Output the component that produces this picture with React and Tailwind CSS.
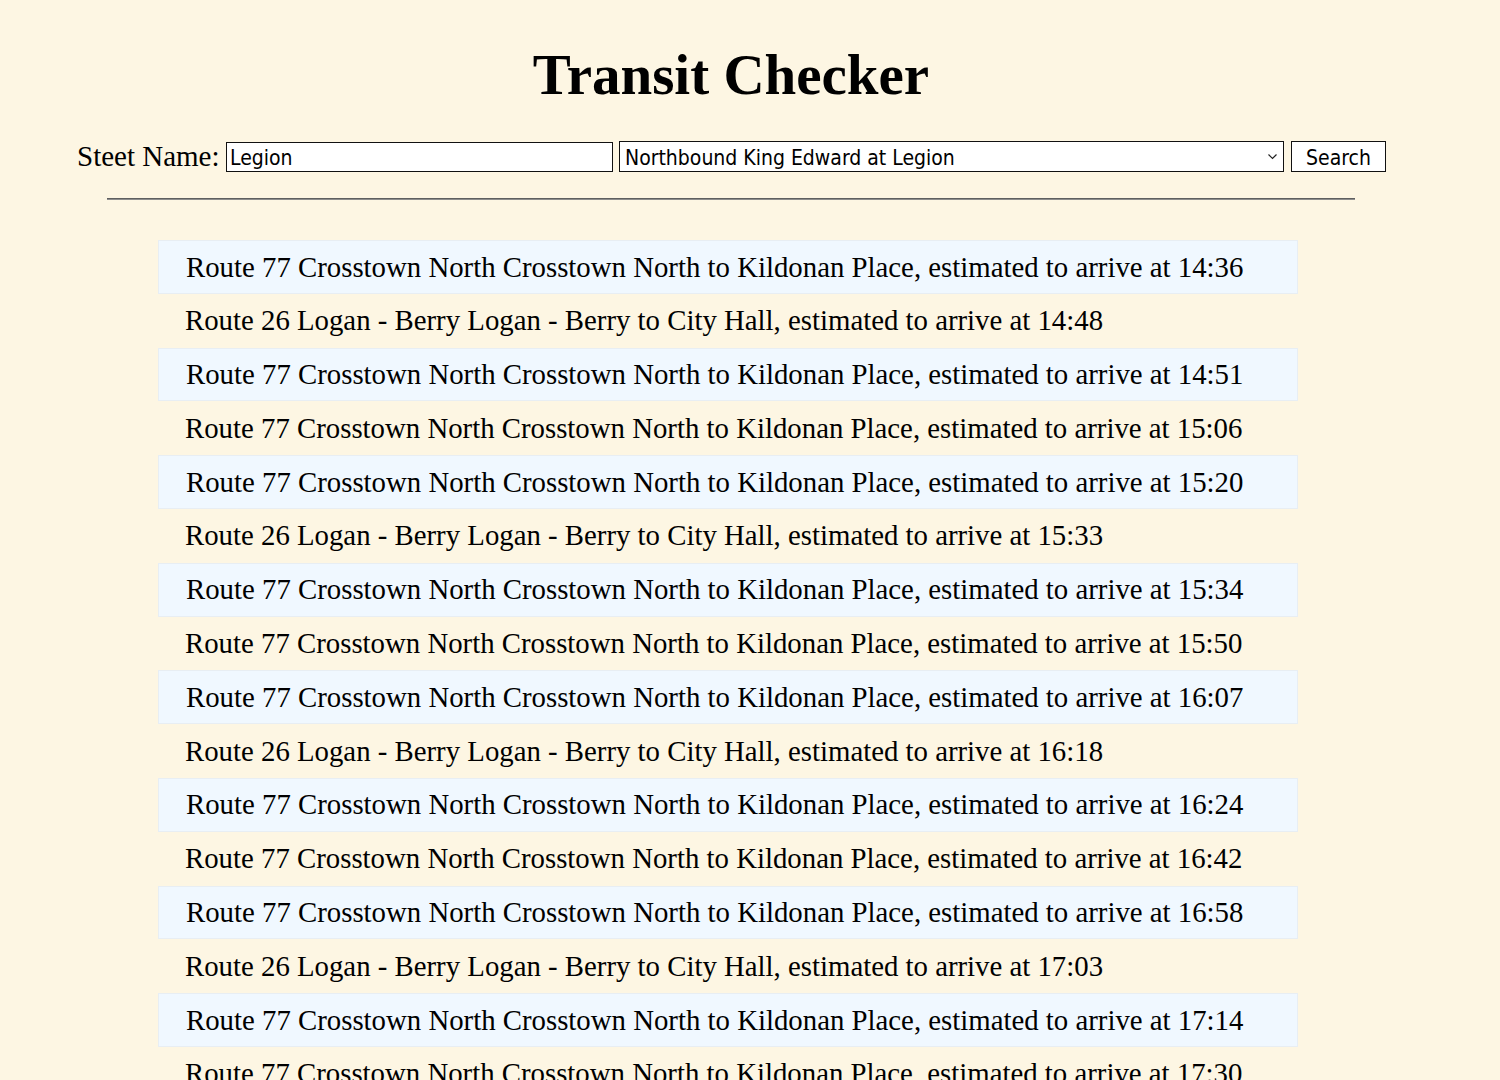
import React from "react";

const rows = [
  ["77", "14:36"],
  ["26", "14:48"],
  ["77", "14:51"],
  ["77", "15:06"],
  ["77", "15:20"],
  ["26", "15:33"],
  ["77", "15:34"],
  ["77", "15:50"],
  ["77", "16:07"],
  ["26", "16:18"],
  ["77", "16:24"],
  ["77", "16:42"],
  ["77", "16:58"],
  ["26", "17:03"],
  ["77", "17:14"],
  ["77", "17:30"],
];

function label(route, time) {
  if (route === "77")
    return `Route 77 Crosstown North Crosstown North to Kildonan Place, estimated to arrive at ${time}`;
  return `Route 26 Logan - Berry Logan - Berry to City Hall, estimated to arrive at ${time}`;
}

export default function App() {
  return (
    <div className="min-h-[1080px] w-full bg-[#fdf6e3] text-black font-['Liberation_Serif',serif] overflow-hidden">
      <div className="w-[1462px]">
        <h1 className="pt-[46px] text-center text-[57px] font-bold leading-none">Transit Checker</h1>

        <div className="mt-[38px] ml-[77px] flex items-center h-[31px]">
          <div className="w-[149px] shrink-0 text-[29px] leading-none">Steet Name:</div>
          <input
            readOnly
            value="Legion"
            className="w-[387px] h-[30px] border border-[#111] bg-white pl-[3px] pt-[2px] text-[21px] leading-none font-['DejaVu_Sans_Condensed','DejaVu_Sans',sans-serif] font-stretch-condensed outline-none"
          />
          <div className="relative ml-[6px] w-[665px] h-[31px]">
            <select
              className="appearance-none w-full h-full border border-[#111] bg-white pl-[5px] pt-[3px] text-[21px] leading-none font-['DejaVu_Sans_Condensed','DejaVu_Sans',sans-serif] font-stretch-condensed outline-none"
              defaultValue="a"
            >
              <option value="a">Northbound King Edward at Legion</option>
            </select>
            <svg
              className="absolute right-[7px] top-[13px] pointer-events-none"
              width="9"
              height="6"
              viewBox="0 0 9 6"
              fill="none"
            >
              <path d="M0.5 0.5 L4.5 4.5 L8.5 0.5" stroke="#222" strokeWidth="1.2" />
            </svg>
          </div>
          <button className="ml-[7px] w-[95px] h-[31px] border border-[#111] bg-white pt-[3px] text-[21px] leading-none font-['DejaVu_Sans_Condensed','DejaVu_Sans',sans-serif] font-stretch-condensed">
            Search
          </button>
        </div>

        <div className="mt-[26px] ml-[107px] w-[1248px] h-[2px] border-t border-t-[#5f5f5f] border-b border-b-[#8d8d8d]" />

        <div className="mt-[40px] ml-[158px] w-[1140px]">
          {rows.map(([r, t], i) => (
            <div
              key={i}
              className={
                i % 2 === 0
                  ? "h-[53.8px] flex items-center pl-[27px] border border-[#e8eef3] bg-[#f0f8ff] text-[28.8px] leading-none"
                  : "h-[53.8px] flex items-center pl-[27px] text-[28.8px] leading-none"
              }
            >
              {label(r, t)}
            </div>
          ))}
        </div>
      </div>
    </div>
  );
}
